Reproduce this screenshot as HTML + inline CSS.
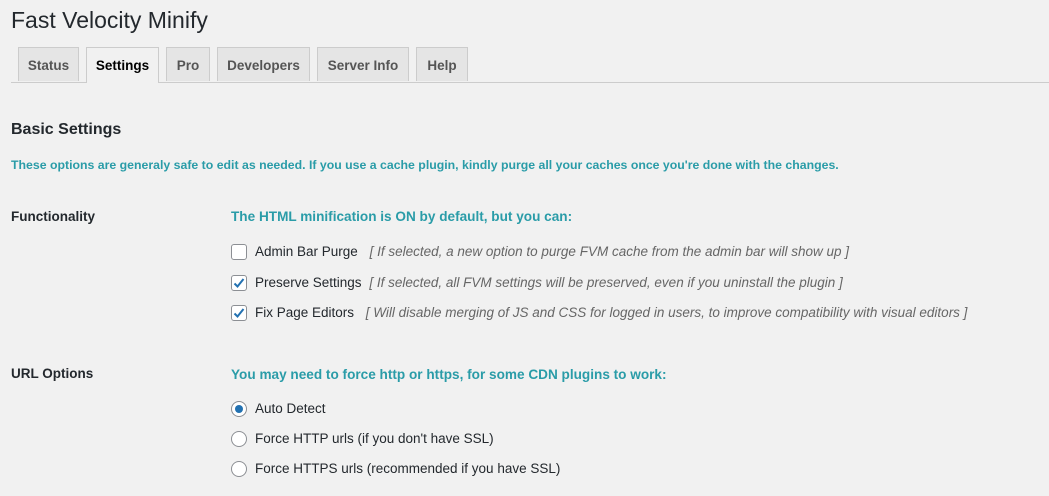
<!DOCTYPE html>
<html><head><style>
body{margin:0;background:#f1f1f1;font-family:"Liberation Sans",sans-serif;color:#23282d;width:1049px;height:496px;overflow:hidden;position:relative;font-size:13px}
.a{position:absolute;white-space:nowrap}
h1{position:absolute;left:11px;top:7px;margin:0;font-size:23px;font-weight:400;color:#23282d}
.tabline{position:absolute;left:11px;right:0;top:82px;border-top:1px solid #ccc}
.tab{position:absolute;top:47px;height:34px;border:1px solid #ccc;border-bottom:none;background:#e5e5e5;color:#555;font-size:13.5px;font-weight:600;line-height:36px;text-align:center;box-sizing:border-box}
.tab.on{background:#f1f1f1;color:#000;height:36px}
.teal{color:#2a9ca8;font-weight:600}
.lbl{font-weight:600;font-size:13.5px}
.cb{position:absolute;width:16px;height:16px;border:1px solid #8c8f94;border-radius:3px;background:#fff;box-sizing:border-box}
.rd{position:absolute;width:16px;height:16px;border:1px solid #8c8f94;border-radius:50%;background:#fff;box-sizing:border-box}
.it{font-style:italic;color:#666}
.t{font-size:13.5px}
</style></head><body>
<h1>Fast Velocity Minify</h1>
<div class="tabline"></div>
<div class="tab" style="left:18px;width:61px">Status</div>
<div class="tab on" style="left:86px;width:73px">Settings</div>
<div class="tab" style="left:166px;width:44px">Pro</div>
<div class="tab" style="left:217px;width:93px">Developers</div>
<div class="tab" style="left:317px;width:92px">Server Info</div>
<div class="tab" style="left:416px;width:52px">Help</div>

<div class="a" style="left:11px;top:121px;font-size:16px;font-weight:600">Basic Settings</div>
<div class="a teal" style="left:11px;top:158px;font-size:12.3px">These options are generaly safe to edit as needed. If you use a cache plugin, kindly purge all your caches once you're done with the changes.</div>

<div class="a lbl" style="left:11px;top:209px">Functionality</div>
<div class="a teal" style="left:231px;top:209px;font-size:13.6px">The HTML minification is ON by default, but you can:</div>

<div class="cb" style="left:231px;top:244px"></div>
<div class="a t" style="left:255px;top:244px">Admin Bar Purge <span class="it" style="margin-left:8px">[ If selected, a new option to purge FVM cache from the admin bar will show up ]</span></div>
<div class="cb" style="left:231px;top:275px"><svg width="14" height="14" viewBox="0 0 14 14" style="position:absolute;left:0;top:0"><path d="M2.5 7.5 L5.5 10.5 L11.5 3" stroke="#2271b1" stroke-width="2" fill="none"/></svg></div>
<div class="a t" style="left:255px;top:275px">Preserve Settings <span class="it" style="margin-left:4px">[ If selected, all FVM settings will be preserved, even if you uninstall the plugin ]</span></div>
<div class="cb" style="left:231px;top:305px"><svg width="14" height="14" viewBox="0 0 14 14" style="position:absolute;left:0;top:0"><path d="M2.5 7.5 L5.5 10.5 L11.5 3" stroke="#2271b1" stroke-width="2" fill="none"/></svg></div>
<div class="a t" style="left:255px;top:305px">Fix Page Editors <span class="it" style="margin-left:8px">[ Will disable merging of JS and CSS for logged in users, to improve compatibility with visual editors ]</span></div>

<div class="a lbl" style="left:11px;top:366px">URL Options</div>
<div class="a teal" style="left:231px;top:367px;font-size:13.6px">You may need to force http or https, for some CDN plugins to work:</div>

<div class="rd" style="left:231px;top:401px"><div style="position:absolute;left:3px;top:3px;width:8px;height:8px;border-radius:50%;background:#2271b1"></div></div>
<div class="a t" style="left:255px;top:401px">Auto Detect</div>
<div class="rd" style="left:231px;top:431px"></div>
<div class="a t" style="left:255px;top:431px">Force HTTP urls (if you don't have SSL)</div>
<div class="rd" style="left:231px;top:461px"></div>
<div class="a t" style="left:255px;top:461px">Force HTTPS urls (recommended if you have SSL)</div>
</body></html>
